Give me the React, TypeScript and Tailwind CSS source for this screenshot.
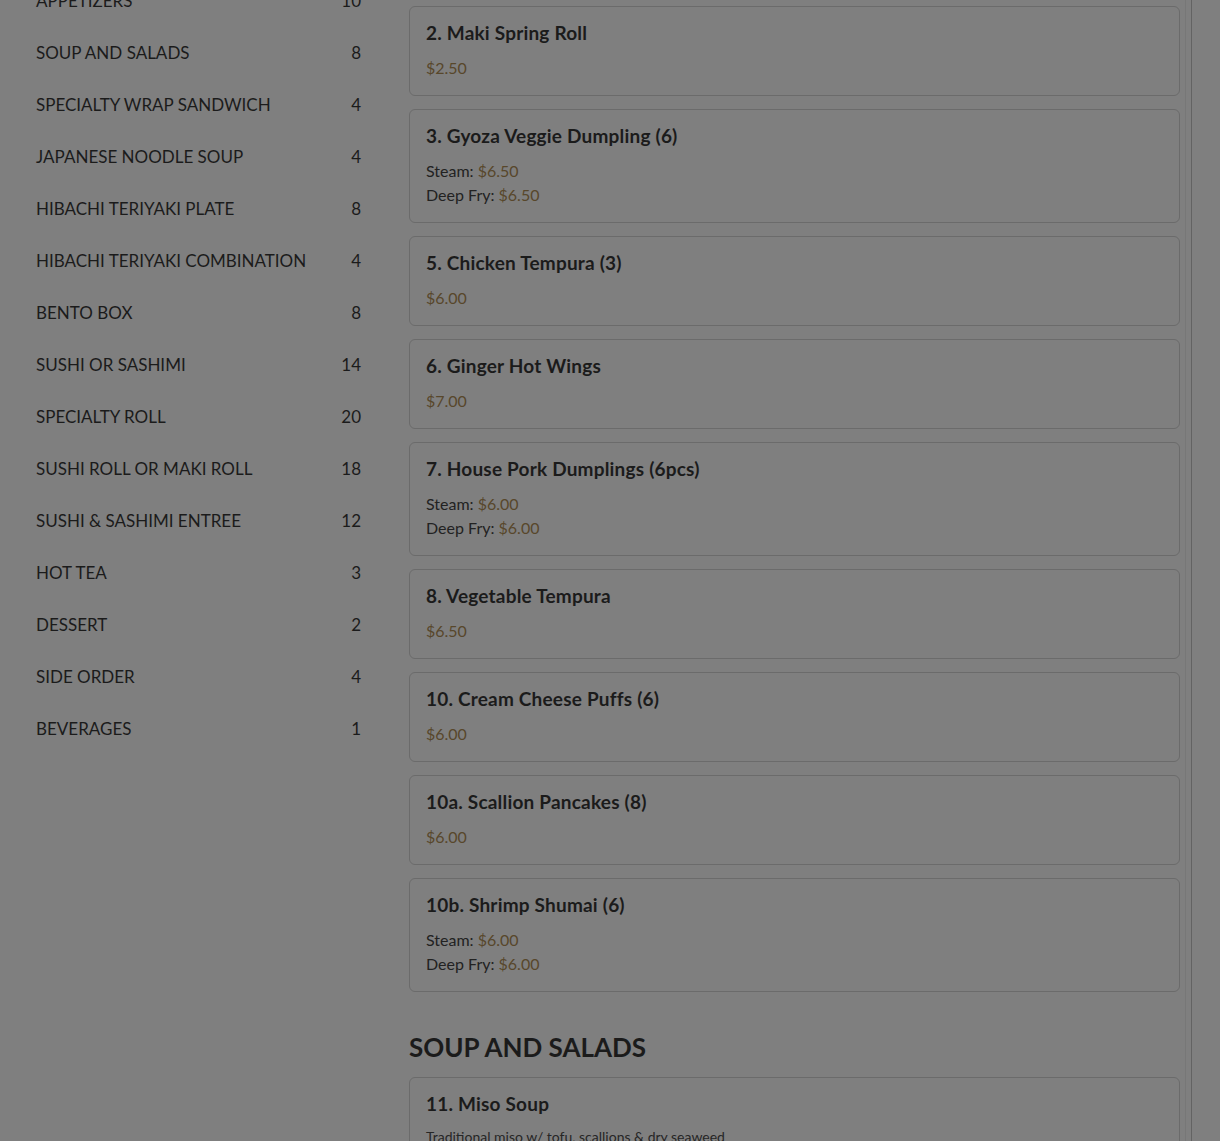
const categories: [string, number][] = [
  ["APPETIZERS", 10],
  ["SOUP AND SALADS", 8],
  ["SPECIALTY WRAP SANDWICH", 4],
  ["JAPANESE NOODLE SOUP", 4],
  ["HIBACHI TERIYAKI PLATE", 8],
  ["HIBACHI TERIYAKI COMBINATION", 4],
  ["BENTO BOX", 8],
  ["SUSHI OR SASHIMI", 14],
  ["SPECIALTY ROLL", 20],
  ["SUSHI ROLL OR MAKI ROLL", 18],
  ["SUSHI & SASHIMI ENTREE", 12],
  ["HOT TEA", 3],
  ["DESSERT", 2],
  ["SIDE ORDER", 4],
  ["BEVERAGES", 1],
];

type Item = { name: string; price?: string; options?: [string, string][]; desc?: string };

const appetizers: Item[] = [
  { name: "2. Maki Spring Roll", price: "$2.50" },
  { name: "3. Gyoza Veggie Dumpling (6)", options: [["Steam", "$6.50"], ["Deep Fry", "$6.50"]] },
  { name: "5. Chicken Tempura (3)", price: "$6.00" },
  { name: "6. Ginger Hot Wings", price: "$7.00" },
  { name: "7. House Pork Dumplings (6pcs)", options: [["Steam", "$6.00"], ["Deep Fry", "$6.00"]] },
  { name: "8. Vegetable Tempura", price: "$6.50" },
  { name: "10. Cream Cheese Puffs (6)", price: "$6.00" },
  { name: "10a. Scallion Pancakes (8)", price: "$6.00" },
  { name: "10b. Shrimp Shumai (6)", options: [["Steam", "$6.00"], ["Deep Fry", "$6.00"]] },
];

function Card({ item }: { item: Item }) {
  return (
    <div className="rounded-[6px] border border-[#6b6b6b] px-4 py-[15px]">
      <div className="text-[19px] leading-[22px] font-bold tracking-[0.2px] text-[#1b1b1b]">{item.name}</div>
      {item.desc && <div className="mt-3 text-[14px] leading-[20px] text-[#262626]">{item.desc}</div>}
      <div className="mt-3">
        {item.price && <div className="text-[16px] leading-[24px] text-[#58472b]">{item.price}</div>}
        {item.options?.map(([label, p]) => (
          <div key={label} className="text-[16px] leading-[24px] text-[#222222]">
            {label}: <span className="text-[#58472b]">{p}</span>
          </div>
        ))}
      </div>
    </div>
  );
}

export default function App() {
  return (
    <div className="h-[1141px] overflow-hidden bg-[#7f7f7f] font-['Lato',sans-serif] text-[#1b1b1b]">
      <div className="flex">
        <aside className="ml-[36px] -mt-[25px] flex w-[325px] flex-col">
          {categories.map(([name, n]) => (
            <div key={name} className="flex h-[52px] items-center justify-between text-[17px] text-[#1b1b1b]">
              <span>{name}</span>
              <span>{n}</span>
            </div>
          ))}
        </aside>
        <div className="ml-[48px] flex h-[1141px]">
          <main className="w-[771px] pt-[6px]">
            <div className="flex flex-col gap-[13px]">
              {appetizers.map((it) => (
                <Card key={it.name} item={it} />
              ))}
            </div>
            <h2 className="mt-[40px] mb-[14px] text-[26px] leading-[31px] font-bold text-[#1b1b1b]">SOUP AND SALADS</h2>
            <Card item={{ name: "11. Miso Soup", desc: "Traditional miso w/ tofu, scallions & dry seaweed", price: "$3.00" }} />
          </main>
          <div className="ml-[5px] w-[6px] border-l border-[#777777]" />
          <div className="w-px bg-[#636363]" />
        </div>
      </div>
    </div>
  );
}
